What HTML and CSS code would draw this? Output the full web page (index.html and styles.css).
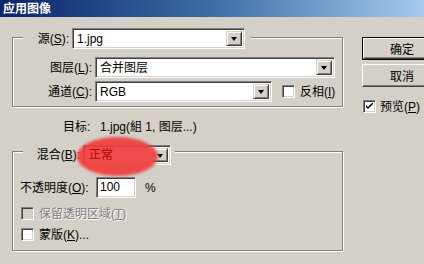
FILE: index.html
```html
<!DOCTYPE html>
<html lang="zh">
<head>
<meta charset="utf-8">
<title>应用图像</title>
<link rel="stylesheet" href="styles.css">
</head>
<body>
<div class="dialog">
  <div class="titlebar">应用图像</div>
  <div class="content">
    <div class="left">
      <div class="group group-src">
        <div class="group-head head-src">
          <span class="lbl lbl-src">源(<u>S</u>):</span>
          <div class="select sel-src"><span class="val">1.jpg</span><span class="arrow"></span></div>
        </div>
        <div class="row row-layer">
          <span class="lbl lbl-wide">图层(<u>L</u>):</span>
          <div class="select sel-layer"><span class="val">合并图层</span><span class="arrow"></span></div>
        </div>
        <div class="row row-chan">
          <span class="lbl lbl-wide">通道(<u>C</u>):</span>
          <div class="select sel-chan"><span class="val">RGB</span><span class="arrow"></span></div>
          <span class="check invert-box"></span>
          <span class="check-text">反相(<u>I</u>)</span>
        </div>
      </div>

      <div class="target">
        <span class="target-lbl">目标:</span>
        <span class="target-val">1.jpg(組 1, 图层...)</span>
      </div>

      <div class="group group-blend">
        <div class="group-head head-blend">
          <span class="lbl lbl-blend">混合(<u>B</u>):</span>
          <div class="select sel-blend">
            <span class="mark"></span>
            <span class="val val-red">正常</span>
            <span class="arrow"></span>
          </div>
        </div>
        <div class="row row-opacity">
          <span class="lbl-opacity">不透明度(<u>O</u>):</span>
          <span class="field">100</span>
          <span class="pct">%</span>
        </div>
        <div class="check-row row-preserve">
          <span class="check disabled"></span>
          <span class="check-text dim">保留透明区域(<u>T</u>)</span>
        </div>
        <div class="check-row row-mask">
          <span class="check"></span>
          <span class="check-text">蒙版(<u>K</u>)...</span>
        </div>
      </div>
    </div>

    <div class="right">
      <div class="btn btn-default"><span class="btn-inner">确定</span></div>
      <div class="btn btn-cancel"><span class="btn-inner">取消</span></div>
      <div class="check-row row-preview">
        <span class="check checked">
          <svg width="7" height="7" viewBox="0 0 7 7"><path d="M0 2 L0 4 L2 6 L7 1 L7 -1 L2 4 Z" fill="#000"/></svg>
        </span>
        <span class="check-text">预览(<u>P</u>)</span>
      </div>
    </div>
  </div>
</div>
</body>
</html>
```

FILE: styles.css
```css
* { box-sizing: border-box; }

html, body {
  margin: 0;
  padding: 0;
  width: 424px;
  height: 264px;
  overflow: hidden;
  background: #d4d0c8;
}

body {
  font-family: "Liberation Sans", "Noto Sans CJK SC", sans-serif;
  font-size: 12px;
  color: #000;
}

u { text-decoration: underline; text-underline-offset: 1px; }

.dialog {
  width: 424px;
  height: 264px;
  display: flex;
  flex-direction: column;
}

.titlebar {
  height: 17px;
  line-height: 16px;
  padding-left: 3px;
  color: #fff;
  font-weight: bold;
  font-size: 12px;
  font-family: "Noto Sans CJK SC", sans-serif;
  background: linear-gradient(to right, #0a246a 0%, #3a6ea5 50%, #a6caf0 100%);
}

.content {
  display: flex;
  flex: 1;
}

.left {
  width: 343px;
  padding-left: 12px;
  display: flex;
  flex-direction: column;
}

.right {
  padding-left: 19px;
  padding-top: 20px;
  display: flex;
  flex-direction: column;
}

/* group boxes */
.group {
  width: 331px;
  border: 1px solid #808080;
  box-shadow: 1px 1px 0 #fff, inset 1px 1px 0 #fff;
  display: flex;
  flex-direction: column;
}

.group-src {
  margin-top: 20px;
  padding-bottom: 4px;
}

.group-blend {
  margin-top: 17px;
  padding-bottom: 9px;
}

.group-head {
  display: flex;
  align-items: center;
  align-self: flex-start;
  background: #d4d0c8;
  margin-left: 10px;
}

.head-src {
  margin-top: -10px;
  padding-right: 6px;
}

.head-blend {
  margin-top: -7px;
  padding-right: 4px;
}

.lbl {
  text-align: right;
  margin-right: 3px;
  line-height: 14px;
  white-space: nowrap;
}

.lbl-src { width: 46px; }
.lbl-wide { width: 79px; }
.lbl-blend { width: 57px; }

.row {
  display: flex;
  align-items: center;
}

.row-layer { margin-top: 8px; }
.row-chan { margin-top: 3px; }

/* select boxes */
.select {
  position: relative;
  height: 21px;
  background: #fff;
  border: 1px solid;
  border-color: #808080 #fff #fff #808080;
  box-shadow: inset 1px 1px 0 #404040, inset -1px -1px 0 #d4d0c8;
  display: flex;
  align-items: center;
  justify-content: space-between;
  padding: 2px;
}

.sel-src { width: 173px; }
.sel-layer { width: 240px; }
.sel-chan { width: 177px; }
.sel-blend { width: 88px; height: 20px; }

.val {
  padding-left: 2px;
  line-height: 14px;
  white-space: nowrap;
}

.val-red {
  position: relative;
  color: #b40000;
  padding-left: 3px;
}

.arrow {
  width: 16px;
  height: 100%;
  background: #d4d0c8;
  border: 1px solid;
  border-color: #d4d0c8 #404040 #404040 #d4d0c8;
  box-shadow: inset 1px 1px 0 #fff, inset -1px -1px 0 #808080;
  display: flex;
  align-items: center;
  justify-content: center;
}

.arrow::after {
  content: "";
  width: 0;
  height: 0;
  border-left: 3.5px solid transparent;
  border-right: 3.5px solid transparent;
  border-top: 4px solid #000;
  margin-top: 1px;
}

/* red highlight ellipse over the blend select */
.mark {
  position: absolute;
  left: -7px;
  top: -9px;
  width: 81px;
  height: 39px;
  border-radius: 50%;
  background: rgba(240, 60, 60, 0.92);
  filter: blur(1.5px);
}

/* checkboxes */
.check {
  width: 13px;
  height: 13px;
  flex: none;
  background: #fff;
  border: 1px solid;
  border-color: #808080 #fff #fff #808080;
  box-shadow: inset 1px 1px 0 #404040, inset -1px -1px 0 #d4d0c8;
  display: flex;
  align-items: center;
  justify-content: center;
}

.check.disabled { background: #d4d0c8; }

.invert-box { margin-left: 10px; }

.check-text {
  margin-left: 5px;
  line-height: 14px;
  white-space: nowrap;
}

.check-text.dim { color: #808080; text-shadow: 1px 1px 0 #fff; }

.check-row {
  display: flex;
  align-items: center;
  height: 13px;
}

.row-preserve { margin-top: 9px; padding-left: 8px; }
.row-mask { margin-top: 8px; padding-left: 8px; }
.row-preserve .check-text,
.row-mask .check-text { margin-left: 5px; }

/* target line */
.target {
  margin-top: 13px;
  padding-left: 51px;
  line-height: 14px;
  display: flex;
}

.target-lbl { width: 37px; }

/* opacity row */
.row-opacity {
  margin-top: 12px;
  padding-left: 7px;
}

.lbl-opacity {
  width: 76px;
  line-height: 14px;
  white-space: nowrap;
}

.field {
  width: 40px;
  height: 21px;
  background: #fff;
  border: 1px solid;
  border-color: #808080 #fff #fff #808080;
  box-shadow: inset 1px 1px 0 #404040, inset -1px -1px 0 #d4d0c8;
  line-height: 19px;
  padding-left: 3px;
}

.pct { margin-left: 9px; }

/* buttons */
.btn {
  width: 80px;
  height: 23px;
  display: flex;
  font-family: "Noto Sans CJK SC", sans-serif;
}

.btn-inner {
  flex: 1;
  display: flex;
  align-items: center;
  justify-content: center;
  border: 1px solid;
  border-color: #fff #404040 #404040 #fff;
  box-shadow: inset -1px -1px 0 #808080;
  line-height: 14px;
}

.btn-default {
  border: 1px solid #000;
}

.btn-cancel { margin-top: 4px; }

.row-preview { margin-top: 13px; padding-left: 1px; }
.row-preview .check-text { margin-left: 4px; }
```
